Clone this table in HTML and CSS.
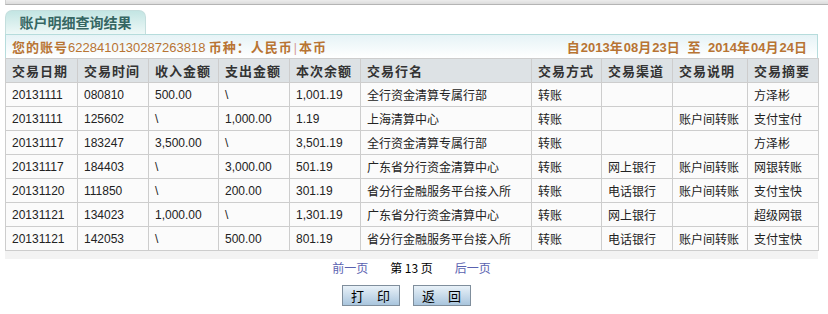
FILE: index.html
```html
<!DOCTYPE html>
<html lang="zh-CN">
<head>
<meta charset="utf-8">
<title>账户明细查询结果</title>
<link rel="stylesheet" href="styles.css">
</head>
<body>
<div class="topbar"></div>
<div class="wrap">
  <div class="tab">账户明细查询结果</div>
  <div class="acct">
    <div class="acct-left"><b>您的账号</b><span class="num">6228410130287263818</span> <b>币种：人民币</b><span class="sep">|</span><b>本币</b></div>
    <div class="acct-right"><b>自</b><span class="d">2013</span><b>年</b><span class="d">08</span><b>月</b><span class="d">23</span><b>日</b>&nbsp;&nbsp;<b>至</b>&nbsp;&nbsp;<span class="d">2014</span><b>年</b><span class="d">04</span><b>月</b><span class="d">24</span><b>日</b></div>
  </div>
  <table class="grid">
    <colgroup>
      <col style="width:72px"><col style="width:71px"><col style="width:70px"><col style="width:71px"><col style="width:71px"><col style="width:171px"><col style="width:70px"><col style="width:71px"><col style="width:75px"><col style="width:71px">
    </colgroup>
    <thead>
      <tr><th>交易日期</th><th>交易时间</th><th>收入金额</th><th>支出金额</th><th>本次余额</th><th>交易行名</th><th>交易方式</th><th>交易渠道</th><th>交易说明</th><th>交易摘要</th></tr>
    </thead>
    <tbody>
      <tr><td>20131111</td><td>080810</td><td>500.00</td><td>\</td><td>1,001.19</td><td>全行资金清算专属行部</td><td>转账</td><td></td><td></td><td>方泽彬</td></tr>
      <tr><td>20131111</td><td>125602</td><td>\</td><td>1,000.00</td><td>1.19</td><td>上海清算中心</td><td>转账</td><td></td><td>账户间转账</td><td>支付宝付</td></tr>
      <tr><td>20131117</td><td>183247</td><td>3,500.00</td><td>\</td><td>3,501.19</td><td>全行资金清算专属行部</td><td>转账</td><td></td><td></td><td>方泽彬</td></tr>
      <tr><td>20131117</td><td>184403</td><td>\</td><td>3,000.00</td><td>501.19</td><td>广东省分行资金清算中心</td><td>转账</td><td>网上银行</td><td>账户间转账</td><td>网银转账</td></tr>
      <tr><td>20131120</td><td>111850</td><td>\</td><td>200.00</td><td>301.19</td><td>省分行金融服务平台接入所</td><td>转账</td><td>电话银行</td><td>账户间转账</td><td>支付宝快</td></tr>
      <tr><td>20131121</td><td>134023</td><td>1,000.00</td><td>\</td><td>1,301.19</td><td>广东省分行资金清算中心</td><td>转账</td><td>网上银行</td><td></td><td>超级网银</td></tr>
      <tr><td>20131121</td><td>142053</td><td>\</td><td>500.00</td><td>801.19</td><td>省分行金融服务平台接入所</td><td>转账</td><td>电话银行</td><td>账户间转账</td><td>支付宝快</td></tr>
    </tbody>
  </table>
  <div class="foot-strip"></div>
  <div class="pager">
    <a class="plink" href="#">前一页</a>
    <span class="pcur">第 13 页</span>
    <a class="plink" href="#">后一页</a>
  </div>
  <div class="actions">
    <button class="btn" type="button">打 印</button>
    <button class="btn" type="button">返 回</button>
  </div>
</div>
</body>
</html>
```

FILE: styles.css
```css
html, body {
  margin: 0;
  padding: 0;
  background: #ffffff;
}
body {
  font-family: "Liberation Sans", Arial, "Noto Sans CJK SC", sans-serif;
  font-size: 12px;
  color: #222;
}
.topbar {
  margin-left: 5px;
  height: 4px;
  background: linear-gradient(#ececec, #dcdcdc);
  border-bottom: 1px solid #b4b4b4;
  border-left: 1px solid #d0d0d0;
}
.wrap {
  padding-left: 5px;
  width: 813px;
}
.tab {
  margin-top: 5px;
  width: 141px;
  height: 24px;
  box-sizing: border-box;
  border: 1px solid #c4dedd;
  border-bottom: none;
  border-radius: 7px 7px 0 0;
  background: linear-gradient(#c3e5e3, #eef8f7);
  color: #356663;
  font-weight: bold;
  font-size: 14px;
  line-height: 23px;
  text-align: center;
  font-family: "Noto Sans CJK SC", sans-serif;
}
.acct {
  display: flex;
  justify-content: space-between;
  align-items: center;
  height: 24px;
  box-sizing: border-box;
  border: 1px solid #b6dcdc;
  border-bottom: none;
  background: linear-gradient(#e6f3f6, #ffffff);
  padding: 0 9px 0 6px;
  color: #b87433;
  font-size: 12px;
}
.acct b {
  font-family: "Noto Sans CJK SC", sans-serif;
  font-weight: bold;
  font-size: 13px;
  letter-spacing: 1px;
}
.acct .num {
  font-size: 13px;
}
.acct .sep {
  color: #d49a9a;
  margin: 0 2px 0 1px;
}
.acct .d {
  font-size: 13px;
  font-weight: bold;
}
.grid {
  border-collapse: collapse;
  table-layout: fixed;
  width: 813px;
}
.grid th, .grid td {
  border: 1px solid #cdcdcd;
  height: 23px;
  padding: 0 0 0 6px;
  text-align: left;
  white-space: nowrap;
  overflow: hidden;
}
.grid th {
  background: #dde2e5;
  color: #333;
  font-weight: bold;
  font-family: "Noto Sans CJK SC", sans-serif;
  font-size: 13px;
  letter-spacing: 1px;
}
.grid td {
  background: #fbfbfb;
  color: #222;
  font-size: 12px;
  font-family: "Liberation Sans", Arial, "Noto Sans CJK SC", sans-serif;
}
.foot-strip {
  height: 8px;
  background: #f3f3f3;
}
.pager {
  display: flex;
  justify-content: center;
  align-items: center;
  gap: 22px;
  height: 16px;
  font-family: "Noto Sans CJK SC", sans-serif;
}
.plink {
  color: #5a62b0;
  text-decoration: none;
}
.pcur {
  color: #000;
}
.actions {
  display: flex;
  justify-content: center;
  gap: 13px;
  margin-top: 10px;
  padding-right: 11px;
}
.btn {
  width: 58px;
  height: 21px;
  padding: 0;
  border: 1px solid #7f8e9c;
  background: linear-gradient(#e8f1f8, #a9c5dd);
  font-family: "Noto Sans CJK SC", sans-serif;
  font-size: 13px;
  color: #000;
  letter-spacing: 5px;
  text-indent: 5px;
}
```
